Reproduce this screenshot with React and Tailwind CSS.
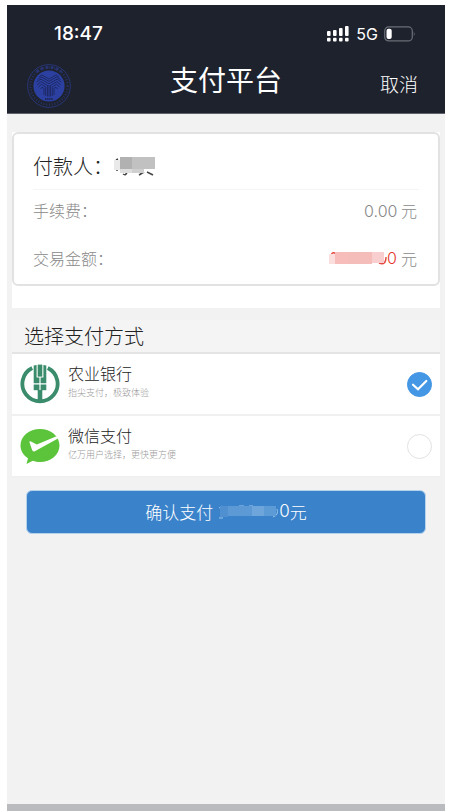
import React, { useState } from "react";

/**
 * Mosaic - row of solid blocks that hides private text
 */
const Mosaic = ({ blocks, width, height, children, className = "" }) => (
  <svg
    width={width}
    height={height}
    viewBox={`0 0 ${width} ${height}`}
    className={`shrink-0 ${className}`}
    aria-hidden="true"
  >
    {children}
    {blocks.map(([x, y, w, h, fill]) => (
      <rect key={`${x}-${y}`} x={x} y={y} width={w} height={h} fill={fill} />
    ))}
  </svg>
);

const SchoolBadge = () => (
  <svg width="44" height="46" viewBox="0 -1 44 46" aria-hidden="true">
    <g fill="none" stroke="#29377c">
      <circle cx="22" cy="22" r="21.4" strokeWidth="0.9" />
      <circle cx="22" cy="22" r="18.600" strokeWidth="2.2" strokeDasharray="1.1 1.7" opacity="0.7" />
      <path d="M9.500 8 A18.600 18.600 0 0 1 34.500 8" strokeWidth="3" strokeDasharray="2.800 2.300" opacity="0.8" />
    </g>
    <circle cx="22" cy="22" r="15.600" fill="#2b40a0" />
    <g fill="none" stroke="#1d2760" strokeWidth="0.9">
      <path d="M12 13 L15 11 L22 15 L29 11 L32 13" />
      <path d="M10.500 15.500 L14.500 13 L22 17.300 L29.500 13 L33.500 15.500" />
      <path d="M9.500 18 L14 15.200 L22 19.700 L30 15.200 L34.500 18" />
      <path d="M10 21 L14 17.600 L20.500 21.500 V32.500" />
      <path d="M34 21 L30 17.600 L23.500 21.500 V32.500" />
      <path d="M11.500 23 L14.500 20.300 L18.700 23 V32" />
      <path d="M32.500 23 L29.500 20.300 L25.300 23 V32" />
      <path d="M13.500 25 L15 23.200 L17 24.500 V31" />
      <path d="M30.500 25 L29 23.200 L27 24.500 V31" />
      <path d="M22 21 V32.500" />
      <path d="M18 35 H26" strokeWidth="1.8" strokeDasharray="1.500 0.600" />
    </g>
  </svg>
);

const SignalIcon = () => (
  <svg width="23" height="16" viewBox="0 0 23 16" fill="#fff" aria-hidden="true">
    <rect x="0" y="5" width="3.600" height="5" rx="1" />
    <rect x="6" y="4" width="3.600" height="6" rx="1" />
    <rect x="12" y="2" width="3.600" height="8" rx="1" />
    <rect x="18" y="0" width="3.600" height="10" rx="1" />
    <rect x="0" y="11.800" width="3.600" height="3.600" rx="1" />
    <rect x="6" y="11.800" width="3.600" height="3.600" rx="1" />
    <rect x="12" y="11.800" width="3.600" height="3.600" rx="1" />
    <rect x="18" y="11.800" width="3.600" height="3.600" rx="1" />
  </svg>
);

const BatteryIcon = () => (
  <svg width="32" height="16" viewBox="0 0 32 16" aria-hidden="true">
    <rect x="0.7" y="0.900" width="27.600" height="14" rx="4" fill="none" stroke="#6b6e76" strokeWidth="1.2" />
    <rect x="2.500" y="2.800" width="5.200" height="10.200" rx="2" fill="#fff" />
    <path d="M29.800 5.500 Q31.500 7.900 29.800 10.300 Z" fill="#6b6e76" />
  </svg>
);

const AgriBankIcon = () => (
  <svg width="40" height="40" viewBox="0 0 40 40" aria-hidden="true">
    <path
      d="M12.200 4 A17.600 17.600 0 1 0 27.800 4"
      fill="none"
      stroke="#3a8c6c"
      strokeWidth="3.800"
    />
    <g fill="#3a8c6c">
      <path d="M17.700 0.600 H22.300 V12.600 H17.700 Z" />
      <path d="M13.700 1.600 L16.600 1 V13.600 H19.400 V19.300 H13.700 Z" />
      <path d="M26.300 1.600 L23.400 1 V13.600 H20.600 V19.300 H26.300 Z" />
      <path d="M13.700 20.500 H19.400 V26.200 H13.700 Z" />
      <path d="M26.300 20.500 H20.600 V26.200 H26.300 Z" />
      <path d="M17.700 26 H22.300 V38 H17.700 Z" />
    </g>
  </svg>
);

const WechatPayIcon = () => (
  <svg width="40" height="40" viewBox="0 0 40 40" aria-hidden="true">
    <path
      d="M20 3 C30.900 3 39.500 10.300 39.500 19.500 C39.500 28.700 30.900 36 20 36 C17.500 36 15 35.700 12.800 34.800 L6.500 38 L8 32.200 C3.300 29.200 0.500 24.700 0.500 19.500 C0.500 10.300 9.100 3 20 3 Z"
      fill="#5bc43a"
    />
    <path
      d="M9.300 15.800 Q9.800 14.900 11 15.600 L16.800 18.600 L36.500 10.300 L38 12.600 L14.800 25.200 Q13 26 12.200 24.300 Z"
      fill="#fff"
    />
  </svg>
);

const methods = [
  { id: "abc", name: "农业银行", desc: "指尖支付，极致体验", Icon: AgriBankIcon },
  { id: "wechat", name: "微信支付", desc: "亿万用户选择，更快更方便", Icon: WechatPayIcon },
];

const MethodRow = ({ id, name, desc, Icon, checked, onChange }) => (
  <label
    htmlFor={id}
    className="flex h-[62px] items-center border-b-2 border-[#f0f0f0] bg-white px-2"
  >
    <Icon />
    <span className="ml-2 flex flex-1 flex-col pb-[6px]">
      <span className="text-base leading-6 text-[#222]">{name}</span>
      <span className="text-[9px] leading-4 text-[#999]">{desc}</span>
    </span>
    <span className="grid place-items-center">
      <input
        id={id}
        type="radio"
        name="method"
        checked={checked}
        onChange={onChange}
        className="col-start-1 row-start-1 size-[25px] appearance-none rounded-full border border-[#e2e2e2] bg-white checked:border-[#4497e5] checked:bg-[#4497e5]"
      />
      {checked && (
        <svg
          width="25"
          height="25"
          viewBox="0 0 25 25"
          className="pointer-events-none col-start-1 row-start-1"
          aria-hidden="true"
        >
          <path
            d="M6 12.700 L11 17.200 L19.300 9"
            fill="none"
            stroke="#fff"
            strokeWidth="2.200"
            strokeLinecap="round"
          />
        </svg>
      )}
    </span>
  </label>
);

const App = () => {
  const [selected, setSelected] = useState("abc");

  return (
    <div className="flex min-h-screen flex-col bg-white pl-[7px] pr-[6px] pt-[5px] font-['Noto_Sans_CJK_SC',sans-serif] font-light">
      <div className="flex flex-1 flex-col bg-[#f2f2f2]">
        <header className="border-b border-[#5f626c] bg-[#1e222d] text-white">
          {/* Status bar */}
          <div className="flex h-[58px] items-center justify-between pl-[47px] pr-[29px] font-['Inter',sans-serif]">
            <span className="text-[19px] font-medium">18:47</span>
            <div className="flex items-center gap-[6px]">
              <SignalIcon />
              <span className="text-base font-normal">5G</span>
              <BatteryIcon />
            </div>
          </div>
          {/* Title bar */}
          <div className="grid h-[50px] grid-cols-3 px-5">
            <SchoolBadge />
            <h1 className="whitespace-nowrap text-center text-[28px] font-normal leading-8">
              支付平台
            </h1>
            <button type="button" className="justify-self-end pb-2 pr-[7px] text-[19px]">
              取消
            </button>
          </div>
        </header>

        <main className="flex flex-1 flex-col px-[5px] pt-[18px]">
          {/* Order summary */}
          <section className="mb-3 bg-white pb-[22px]">
            <div className="rounded-md border-2 border-[#e2e2e2] bg-white px-[19px] pb-1">
              <div className="flex h-[56px] items-center border-b border-[#f5f5f5] pt-2 text-xl text-[#222]">
                <span>付款人：</span>
                <Mosaic
                  width={42}
                  height={20}
                  blocks={[
                    [1, 4, 6, 10, "#e9e9e9"],
                    [7, 1, 12, 12, "#b1b1b1"],
                    [19, 1, 24, 12, "#c1c1c1"],
                    [7, 13, 12, 4, "#dedede"],
                    [19, 13, 12, 4, "#cfcfcf"],
                  ]}
                >
                  <path
                    d="M3 4 L5 3 M3 14 H5 M10 18 Q13 20 14 16 M26 19 L31 16 M34 16 L40 19"
                    fill="none"
                    stroke="#444"
                    strokeWidth="1.5"
                  />
                </Mosaic>
              </div>
              <dl className="pr-[2px] text-base text-[#888]">
                <div className="flex h-12 items-center justify-between pb-2">
                  <dt>手续费：</dt>
                  <dd>
                    <span className="font-['Inter',sans-serif]">0.00</span> 元
                  </dd>
                </div>
                <div className="flex h-[42px] items-center justify-between pb-[2px]">
                  <dt>交易金额：</dt>
                  <dd className="flex items-center">
                    <Mosaic
                      width={58}
                      height={14}
                      blocks={[
                        [0, 3, 6, 10, "#fbdede"],
                        [6, 1, 13, 12, "#f6bdbb"],
                        [19, 1, 24, 12, "#f5bdb9"],
                        [43, 1, 12, 11, "#f8cfce"],
                      ]}
                    >
                      <path
                        d="M2 4 Q4 0 7 3 M50 12 Q57 15 57 6"
                        fill="none"
                        stroke="#e5483f"
                        strokeWidth="1.4"
                      />
                    </Mosaic>
                    <span className="font-['Inter',sans-serif] text-[#e5352b]">0</span>
                    <span className="ml-1">元</span>
                  </dd>
                </div>
              </dl>
            </div>
          </section>

          {/* Payment methods */}
          <fieldset>
            <legend className="w-full border-b-2 border-[#e4e4e4] bg-[#f4f4f4] pl-3 text-xl leading-8 text-[#222]">
              选择支付方式
            </legend>
            {methods.map((method) => (
              <MethodRow
                key={method.id}
                {...method}
                checked={selected === method.id}
                onChange={() => setSelected(method.id)}
              />
            ))}
          </fieldset>

          <button
            type="button"
            className="mx-[14px] mt-3 flex h-11 items-center justify-center rounded-md border border-[#b5d3ee] bg-[#3a83cb] text-[17px] text-white"
          >
            <span>确认支付</span>
            <Mosaic
              width={60}
              height={14}
              className="ml-[6px]"
              blocks={[
                [1, 1, 8, 11, "#5090d0"],
                [9, 1, 24, 10, "#5d9ad5"],
                [33, 1, 12, 10, "#6ea5da"],
                [45, 1, 12, 10, "#5c9bd6"],
              ]}
            >
              <path
                d="M0 3 Q3 0 5 2 M0 13 H4 M20 1 H25 M30 1 H34 M54 12 Q60 10 58 4"
                fill="none"
                stroke="#9cc3e8"
                strokeWidth="1"
              />
            </Mosaic>
            <span className="font-['Inter',sans-serif]">0</span>
            <span>元</span>
          </button>
        </main>

        <footer className="h-[7px] bg-[#babbbf]" />
      </div>
    </div>
  );
};

export default App;
